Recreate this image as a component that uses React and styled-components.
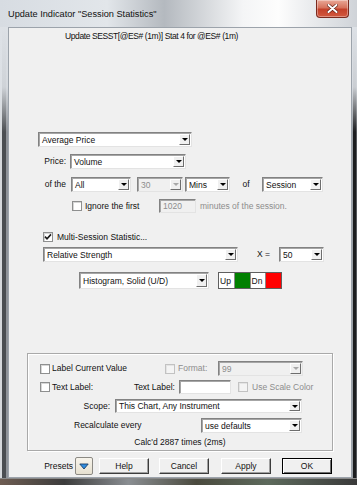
import React from "react";
import styled, { createGlobalStyle } from "styled-components";

const GlobalStyle = createGlobalStyle`
    html, body {
        margin: 0;
        padding: 0;
        background: #fff;
    }
    body {
        width: 357px;
        height: 485px;
        overflow: hidden;
        font-family: "Liberation Sans", Arial, sans-serif;
    }
`;

const Window = styled.div`
    width: 357px;
    height: 485px;
    display: grid;
    grid-template-columns: 8px 344px 5px;
    grid-template-rows: 27px 451px 7px;
    background: #c9ced4;
    overflow: hidden;
`;

const TitleBar = styled.div`
    grid-column: 1 / -1;
    display: flex;
    align-items: center;
    justify-content: space-between;
    padding-left: 8px;
    background: linear-gradient(
        to right,
        #d7dce2 0%,
        #e2e6ea 30%,
        #b4b9bf 46%,
        #f4f5f6 68%,
        #fdfdfd 78%,
        #cfd3d8 100%
    );
`;

const Caption = styled.span`
    font-size: 9.2px;
    color: #111;
    white-space: nowrap;
`;

const CloseButton = styled.div`
    align-self: flex-start;
    width: 33px;
    height: 18px;
    margin-right: 8px;
    box-sizing: border-box;
    border: 1px solid #7b2a1e;
    border-top: none;
    border-radius: 0 0 4px 4px;
    background: linear-gradient(to bottom, #e9a897 0%, #d7735d 45%, #c4412a 55%, #d2593f 100%);
    box-shadow: inset 0 0 0 1px rgba(255, 255, 255, 0.35);
    display: flex;
    align-items: center;
    justify-content: center;
`;

const FrameSide = styled.div`
    background: linear-gradient(
            to bottom,
            rgba(221, 225, 230, 1) 0px,
            rgba(221, 225, 230, 0.9) 60px,
            rgba(221, 225, 230, 0) 105px
        ),
        ${(p) => p.$stripes};
`;

const FrameBottom = styled.div`
    grid-column: 1 / -1;
    border-top: 1px solid #8a8a8a;
    background: linear-gradient(
        to right,
        #6e5d52 0%,
        #3c3c3c 18%,
        #8a8e92 36%,
        #4a4a3e 55%,
        #5d6a5c 75%,
        #3a3a3a 100%
    );
`;

const Client = styled.div`
    background: #f0f0f0;
    border: 1px solid #9ca3ab;
    display: flex;
    flex-direction: column;
    font-size: 8.5px;
    color: #111;
    overflow: hidden;
`;

const Row = styled.div`
    display: flex;
    align-items: center;
    flex-shrink: 0;
    height: ${(p) => p.$h}px;
    margin-top: ${(p) => p.$mt || 0}px;
    padding-left: ${(p) => p.$pl || 0}px;
    justify-content: ${(p) => (p.$center ? "center" : "flex-start")};
`;

const Label = styled.span`
    display: inline-block;
    flex-shrink: 0;
    width: ${(p) => (p.$w ? `${p.$w}px` : "auto")};
    margin-left: ${(p) => p.$ml || 0}px;
    text-align: ${(p) => p.$align || "left"};
    letter-spacing: ${(p) => p.$tight || 0}px;
    color: ${(p) => (p.$disabled ? "#8d8d8d" : "#111")};
    white-space: nowrap;
    line-height: 11px;
`;

const ComboBox = styled.div`
    box-sizing: border-box;
    flex-shrink: 0;
    width: ${(p) => p.$w}px;
    height: ${(p) => p.$h || 15}px;
    margin-left: ${(p) => p.$ml || 0}px;
    display: flex;
    align-items: stretch;
    background: ${(p) => (p.$disabled ? "#f0f0f0" : "#fff")};
    border: 1px solid;
    border-color: #828282 #e3e3e3 #e3e3e3 #828282;
    box-shadow: inset 1px 1px 0 #a6a6a6;
`;

const ComboValue = styled.span`
    flex: 1;
    display: flex;
    align-items: center;
    padding-left: 3px;
    white-space: nowrap;
    overflow: hidden;
    color: ${(p) => (p.$disabled ? "#8d8d8d" : "#111")};
`;

const ArrowButton = styled.span`
    box-sizing: border-box;
    width: 11px;
    margin: 1px;
    display: flex;
    align-items: center;
    justify-content: center;
    background: #f0f0f0;
    border: 1px solid;
    border-color: #ffffff #6e6e6e #6e6e6e #ffffff;

    &::after {
        content: "";
        border-left: 3px solid transparent;
        border-right: 3px solid transparent;
        border-top: 3px solid ${(p) => (p.$disabled ? "#a8a8a8" : "#000")};
    }
`;

const TextBox = styled.div`
    box-sizing: border-box;
    flex-shrink: 0;
    width: ${(p) => p.$w}px;
    height: ${(p) => p.$h || 14}px;
    margin-left: ${(p) => p.$ml || 0}px;
    display: flex;
    align-items: center;
    padding-left: 3px;
    background: ${(p) => (p.$disabled ? "#f0f0f0" : "#fff")};
    color: ${(p) => (p.$disabled ? "#8d8d8d" : "#111")};
    border: 1px solid;
    border-color: #828282 #e3e3e3 #e3e3e3 #828282;
    box-shadow: inset 1px 1px 0 #a6a6a6;
`;

const CheckBox = styled.span`
    box-sizing: border-box;
    flex-shrink: 0;
    width: 10px;
    height: 10px;
    margin-left: ${(p) => p.$ml || 0}px;
    display: flex;
    align-items: center;
    justify-content: center;
    background: ${(p) => (p.$disabled ? "#f4f4f4" : "#fff")};
    border: 1px solid ${(p) => (p.$disabled ? "#c2c2c2" : "#8e8f8f")};
    box-shadow: inset 1px 1px 0 ${(p) => (p.$disabled ? "#e4e4e4" : "#d6d6d6")};
`;

const ColorStrip = styled.div`
    box-sizing: border-box;
    flex-shrink: 0;
    display: flex;
    width: 64px;
    height: 17px;
    margin-left: 9px;
    border: 1px solid #5f5f5f;
`;

const ColorCell = styled.div`
    flex: 1;
    display: flex;
    align-items: center;
    padding-left: 1px;
    background: ${(p) => p.$color};
    border-left: ${(p) => (p.$first ? "none" : "1px solid #8a8a8a")};
`;

const Group = styled.div`
    box-sizing: border-box;
    flex-shrink: 0;
    width: 306px;
    height: 98px;
    margin: 64px 0 0 18px;
    display: flex;
    flex-direction: column;
    border: 1px solid #a9a9a9;
    box-shadow: 1px 1px 0 #fff, inset 1px 1px 0 #fff;
`;

const Button = styled.button`
    box-sizing: border-box;
    flex-shrink: 0;
    width: 50px;
    height: 16px;
    margin-left: ${(p) => p.$ml || 0}px;
    padding: 0;
    font-family: inherit;
    font-size: 8.5px;
    color: #111;
    background: #f0f0f0;
    border: 1px solid;
    border-color: ${(p) =>
        p.$default ? "#000" : "#ffffff #3c3c3c #3c3c3c #ffffff"};
    box-shadow: ${(p) =>
        p.$default
            ? "inset 1px 1px 0 #fff, inset -1px -1px 0 #6e6e6e"
            : "inset -1px -1px 0 #a0a0a0"};
`;

const PresetsButton = styled.div`
    box-sizing: border-box;
    flex-shrink: 0;
    width: 18px;
    height: 18px;
    margin-left: 2px;
    display: flex;
    align-items: center;
    justify-content: center;
    border: 1px solid #8c8a84;
    border-radius: 2px;
    background: linear-gradient(to bottom, #f7f4ec 0%, #e6e0d0 100%);
`;

const Combo = ({ w, h, ml, value, disabled }) => (
    <ComboBox $w={w} $h={h} $ml={ml} $disabled={disabled}>
        <ComboValue $disabled={disabled}>{value}</ComboValue>
        <ArrowButton $disabled={disabled} />
    </ComboBox>
);

const Check = ({ checked, disabled, ml }) => (
    <CheckBox $disabled={disabled} $ml={ml}>
        {checked && (
            <svg width="8" height="8" viewBox="0 0 8 8">
                <path
                    d="M1 3.6 L3 5.8 L7 1.4"
                    fill="none"
                    stroke="#1a1a1a"
                    strokeWidth="1.6"
                />
            </svg>
        )}
    </CheckBox>
);

const App = () => (
    <>
        <GlobalStyle />
        <Window>
            <TitleBar>
                <Caption>Update Indicator "Session Statistics"</Caption>
                <CloseButton>
                    <svg width="11" height="9" viewBox="0 0 11 9">
                        <path
                            d="M1.5 1 L9.5 8 M9.5 1 L1.5 8"
                            stroke="#5a1a10"
                            strokeWidth="3.2"
                            strokeLinecap="round"
                        />
                        <path
                            d="M1.5 1 L9.5 8 M9.5 1 L1.5 8"
                            stroke="#fff"
                            strokeWidth="2"
                            strokeLinecap="round"
                        />
                    </svg>
                </CloseButton>
            </TitleBar>
            <FrameSide
                $stripes="linear-gradient(to right, #d6d9dc 0 2px, #4b4e52 2px 6px, #8f9399 6px 8px)"
            />
            <Client>
                <Row $h={12} $mt={2} $pl={56}>
                    <Label $tight={-0.4}>
                        Update SESST[@ES# (1m)] Stat 4 for @ES# (1m)
                    </Label>
                </Row>

                <Row $h={15} $mt={90} $pl={29}>
                    <Combo w={154} value="Average Price" />
                </Row>
                <Row $h={15} $mt={7} $pl={29}>
                    <Label $w={28} $align="right">
                        Price:
                    </Label>
                    <Combo w={116} ml={4} value="Volume" />
                </Row>
                <Row $h={15} $mt={8} $pl={29}>
                    <Label $w={28} $align="right">
                        of the
                    </Label>
                    <Combo w={60} ml={5} value="All" />
                    <Combo w={46} ml={6} value="30" disabled />
                    <Combo w={45} ml={2} value="Mins" />
                    <Label $w={32} $align="center">
                        of
                    </Label>
                    <Combo w={61} value="Session" />
                </Row>
                <Row $h={14} $mt={7} $pl={63}>
                    <Check />
                    <Label $w={74} $ml={3}>
                        Ignore the first
                    </Label>
                    <TextBox $w={37} $disabled>
                        1020
                    </TextBox>
                    <Label $ml={4} $disabled>
                        minutes of the session.
                    </Label>
                </Row>

                <Row $h={12} $mt={18} $pl={34}>
                    <Check checked />
                    <Label $ml={4}>Multi-Session Statistic...</Label>
                </Row>
                <Row $h={15} $mt={4} $pl={34}>
                    <Combo w={195} value="Relative Strength" />
                    <Label $w={22} $ml={19}>
                        X =
                    </Label>
                    <Combo w={45} value="50" />
                </Row>
                <Row $h={17} $mt={10} $pl={70}>
                    <Combo w={130} h={17} value="Histogram, Solid (U/D)" />
                    <ColorStrip>
                        <ColorCell $color="#fff" $first>
                            Up
                        </ColorCell>
                        <ColorCell $color="#008000" />
                        <ColorCell $color="#fff">Dn</ColorCell>
                        <ColorCell $color="#ff0000" />
                    </ColorStrip>
                </Row>

                <Group>
                    <Row $h={15} $mt={7} $pl={12}>
                        <Check />
                        <Label $w={113} $ml={2}>
                            Label Current Value
                        </Label>
                        <Check disabled />
                        <Label $w={40} $ml={3} $disabled>
                            Format:
                        </Label>
                        <Combo w={85} value="99" disabled />
                    </Row>
                    <Row $h={14} $mt={4} $pl={12}>
                        <Check />
                        <Label $w={81} $ml={2}>
                            Text Label:
                        </Label>
                        <Label $w={42} $align="right">
                            Text Label:
                        </Label>
                        <TextBox $w={52} $ml={4} />
                        <Check disabled ml={7} />
                        <Label $ml={4} $disabled>
                            Use Scale Color
                        </Label>
                    </Row>
                    <Row $h={14} $mt={5}>
                        <Label $w={82} $align="right">
                            Scope:
                        </Label>
                        <Combo w={187} h={14} ml={5} value="This Chart, Any Instrument" />
                    </Row>
                    <Row $h={15} $mt={5} $pl={46}>
                        <Label $w={127}>Recalculate every</Label>
                        <Combo w={101} value="use defaults" />
                    </Row>
                    <Row $h={12} $mt={3} $center>
                        <Label>Calc'd 2887 times (2ms)</Label>
                    </Row>
                </Group>

                <Row $h={18} $mt={6} $pl={33}>
                    <Label $w={31} $align="right">
                        Presets
                    </Label>
                    <PresetsButton>
                        <svg width="10" height="7" viewBox="0 0 10 7">
                            <path
                                d="M0.8 1 L9.2 1 L5 6 Z"
                                fill="#2f8de0"
                                stroke="#1d3f66"
                                strokeWidth="0.9"
                                strokeLinejoin="round"
                            />
                        </svg>
                    </PresetsButton>
                    <Button $ml={6}>Help</Button>
                    <Button $ml={10}>Cancel</Button>
                    <Button $ml={12}>Apply</Button>
                    <Button $ml={11} $default>
                        OK
                    </Button>
                </Row>
            </Client>
            <FrameSide
                $stripes="linear-gradient(to right, #9aa0a6 0 1px, #1c1d1f 1px 4px, #55585c 4px 5px)"
            />
            <FrameBottom />
        </Window>
    </>
);

export default App;
